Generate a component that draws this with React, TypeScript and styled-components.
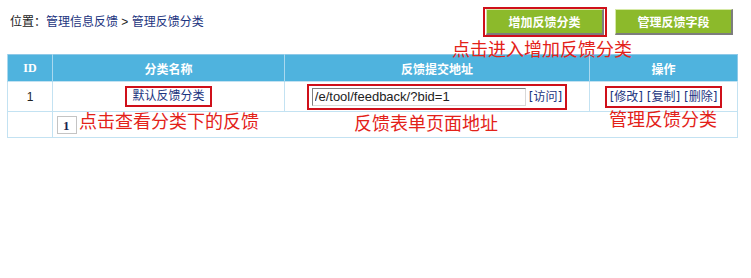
import styled, { createGlobalStyle } from "styled-components";

const GlobalStyle = createGlobalStyle`
  html, body {
    margin: 0;
    padding: 0;
    background: #fff;
  }
  body {
    font-family: "Liberation Sans", "Noto Sans CJK SC", sans-serif;
    font-size: 12px;
    color: #222;
  }
`;

const Page = styled.div`
  position: relative;
  width: 751px;
  height: 278px;
  padding: 7px 14px 0 7px;
  box-sizing: border-box;
`;

const TopBar = styled.div`
  display: flex;
  align-items: center;
  justify-content: space-between;
  height: 30px;
  padding: 0 4px 0 3px;
`;

const Crumbs = styled.div`
  font-size: 12px;
  line-height: 16px;
  color: #222;
`;

const CrumbLink = styled.a`
  color: #1c3480;
  text-decoration: none;
`;

const ButtonGroup = styled.div`
  display: flex;
  align-items: center;
  gap: 8px;
`;

const Highlight = styled.div<{ $pad?: string }>`
  display: inline-flex;
  align-items: center;
  gap: 3px;
  border: 2px solid #cf101a;
  padding: ${(p) => p.$pad ?? "0 1px"};
`;

const ActionButton = styled.button`
  width: 118px;
  height: 26px;
  box-sizing: border-box;
  background: #8cba2b;
  border-style: solid;
  border-width: 1px 2px 2px 1px;
  border-color: #d6e9a6 #7d7d7d #7d7d7d #d6e9a6;
  color: #fff;
  font-family: "Noto Sans CJK SC", sans-serif;
  font-weight: bold;
  font-size: 12px;
  padding: 0;
  cursor: pointer;
`;

const Table = styled.table`
  margin-top: 17px;
  width: 730px;
  table-layout: fixed;
  border-collapse: collapse;
  border: 1px solid #8ec9e8;
`;

const HeadCell = styled.th<{ $serif?: boolean }>`
  height: 26px;
  padding: 0;
  background: #4fb3de;
  color: #fff;
  font-weight: bold;
  font-size: 12px;
  font-family: ${(p) =>
    p.$serif ? `"Liberation Serif", serif` : `"Noto Sans CJK SC", sans-serif`};
  border-left: 1px solid #a9d8ef;
  text-align: center;
`;

const Cell = styled.td<{ $height: number; $align?: string }>`
  height: ${(p) => p.$height}px;
  padding: ${(p) => (p.$align === "left" ? "0 0 0 4px" : "0")};
  border: 1px solid #c3e2f2;
  text-align: ${(p) => p.$align ?? "center"};
  vertical-align: middle;
  font-size: 12px;
  color: #222;
`;

const NameLink = styled.a`
  color: #1c3480;
  text-decoration: none;
  line-height: 17px;
  padding: 0 3px;
`;

const UrlInput = styled.input`
  width: 214px;
  height: 18px;
  box-sizing: border-box;
  border-style: solid;
  border-width: 1px;
  border-color: #808080 #d8d8d8 #d8d8d8 #808080;
  font-family: "Liberation Sans", sans-serif;
  font-size: 13px;
  color: #222;
  padding: 0 2px;
  margin: 2px 0 2px 3px;
`;

const TextLink = styled.a`
  color: #1c3480;
  text-decoration: none;
  font-family: "DejaVu Sans", "Noto Sans CJK SC", sans-serif;
  line-height: 18px;
  white-space: pre;
`;

const PageBox = styled.span`
  display: inline-block;
  width: 20px;
  height: 18px;
  box-sizing: border-box;
  border: 1px solid #c4c4c4;
  padding-left: 5px;
  font-family: "Liberation Serif", serif;
  font-weight: bold;
  font-size: 13px;
  line-height: 18px;
  color: #1a2550;
  vertical-align: middle;
`;

const Note = styled.div<{ $top: number; $left: number }>`
  position: absolute;
  top: ${(p) => p.$top}px;
  left: ${(p) => p.$left}px;
  font-family: "Noto Sans CJK SC", sans-serif;
  font-size: 18px;
  line-height: 18px;
  color: #e32219;
  white-space: nowrap;
  pointer-events: none;
`;

export default function App() {
  return (
    <>
      <GlobalStyle />
      <Page>
        <TopBar>
          <Crumbs>
            位置：<CrumbLink href="#">管理信息反馈</CrumbLink> &gt;{" "}
            <CrumbLink href="#">管理反馈分类</CrumbLink>
          </Crumbs>
          <ButtonGroup>
            <Highlight>
              <ActionButton>增加反馈分类</ActionButton>
            </Highlight>
            <ActionButton>管理反馈字段</ActionButton>
          </ButtonGroup>
        </TopBar>

        <Table>
          <colgroup>
            <col style={{ width: 45 }} />
            <col style={{ width: 232 }} />
            <col style={{ width: 305 }} />
            <col style={{ width: 148 }} />
          </colgroup>
          <thead>
            <tr>
              <HeadCell $serif>ID</HeadCell>
              <HeadCell>分类名称</HeadCell>
              <HeadCell>反馈提交地址</HeadCell>
              <HeadCell>操作</HeadCell>
            </tr>
          </thead>
          <tbody>
            <tr>
              <Cell $height={29}>1</Cell>
              <Cell $height={29}>
                <Highlight $pad="0 2px">
                  <NameLink href="#">默认反馈分类</NameLink>
                </Highlight>
              </Cell>
              <Cell $height={29}>
                <Highlight $pad="0 3px 0 0">
                  <UrlInput readOnly value="/e/tool/feedback/?bid=1" />
                  <TextLink href="#">[访问]</TextLink>
                </Highlight>
              </Cell>
              <Cell $height={29}>
                <Highlight $pad="0 3px">
                  <TextLink href="#">[修改] [复制] [删除]</TextLink>
                </Highlight>
              </Cell>
            </tr>
            <tr>
              <Cell $height={25} />
              <Cell $height={25} $align="left" colSpan={3}>
                <PageBox>1</PageBox>
              </Cell>
            </tr>
          </tbody>
        </Table>

        <Note $top={39} $left={452}>点击进入增加反馈分类</Note>
        <Note $top={111} $left={79}>点击查看分类下的反馈</Note>
        <Note $top={113} $left={354}>反馈表单页面地址</Note>
        <Note $top={109} $left={609}>管理反馈分类</Note>
      </Page>
    </>
  );
}
